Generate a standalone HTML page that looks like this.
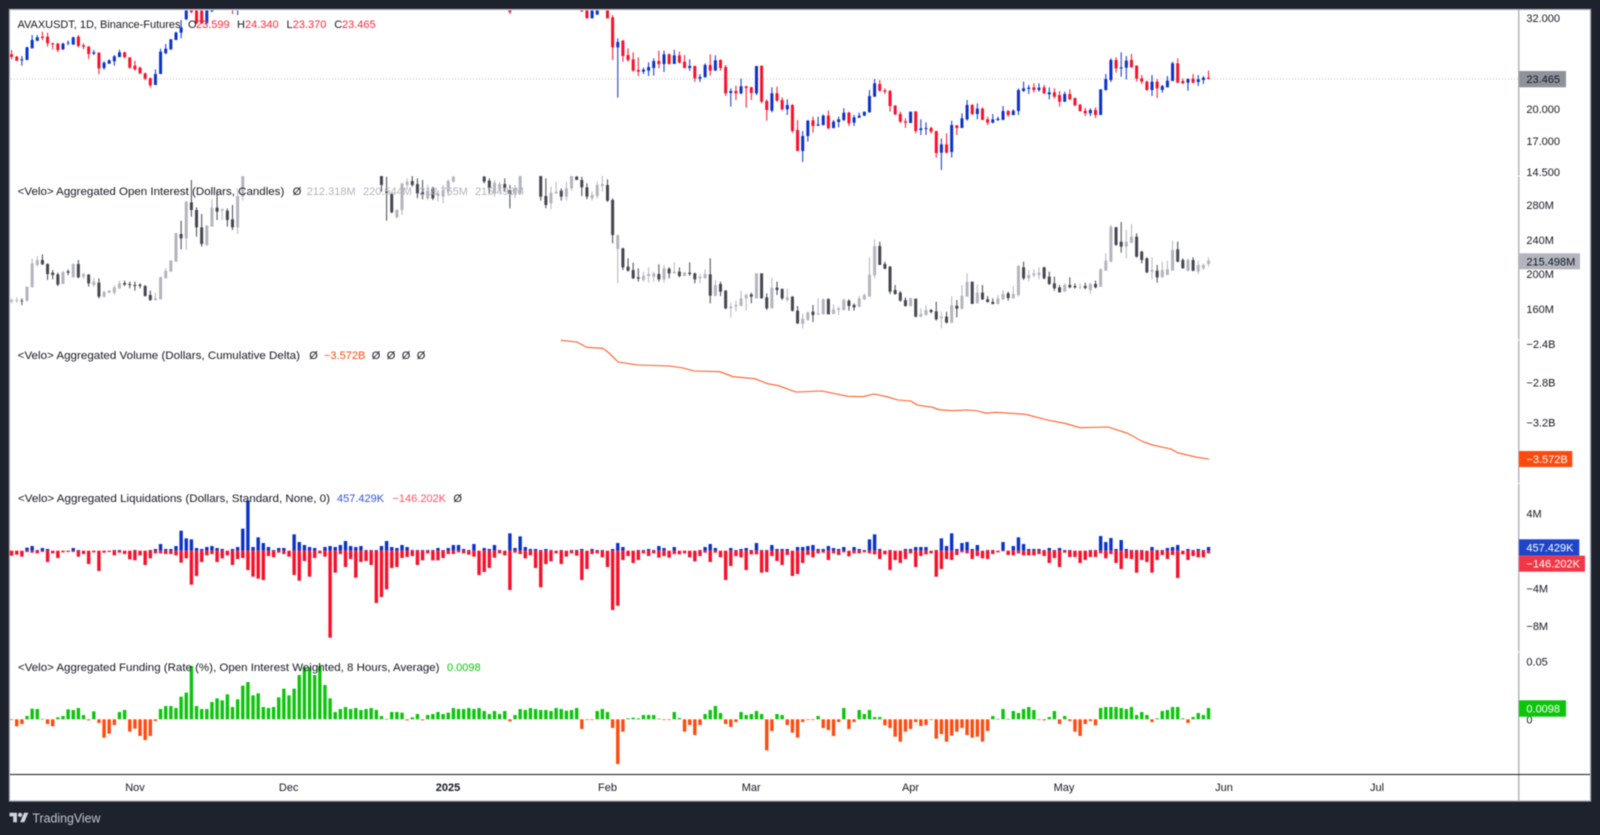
<!DOCTYPE html>
<html><head><meta charset="utf-8"><title>AVAXUSDT</title>
<style>
html,body{margin:0;padding:0;background:#1e222d;width:1600px;height:835px;overflow:hidden}
svg{display:block;position:absolute;left:0;top:0;filter:blur(.4px)}
text{font-family:"Liberation Sans",sans-serif;font-size:11px;fill:#131722;white-space:pre}
.g{fill:#b2b5be}.w{fill:#fff}
</style></head><body>
<svg id="s" xmlns="http://www.w3.org/2000/svg" width="1600" height="835" viewBox="0 0 1600 835">
<defs>
<clipPath id="c1"><rect x="10" y="10.5" width="1580" height="165.5"/></clipPath>
<clipPath id="c2"><rect x="10" y="176" width="1580" height="164"/></clipPath>
<clipPath id="c3"><rect x="10" y="340" width="1580" height="143"/></clipPath>
</defs>
<rect x="0" y="0" width="1600" height="835" fill="#1e222d"/>
<rect x="9.5" y="9.5" width="1581" height="791.5" fill="#fff" stroke="#aeb1b9" stroke-width="1.2"/>
<line x1="11" y1="79" x2="1518" y2="79" stroke="#bfc1c7" stroke-width="1" stroke-dasharray="1 2"/>
<g id="g1" clip-path="url(#c1)"></g>
<g id="g2" clip-path="url(#c2)"></g>
<g id="g3"></g>
<g id="g4"></g>
<g id="g5"></g>

<!-- legends -->
<text x="17.5" y="28" textLength="163" lengthAdjust="spacingAndGlyphs">AVAXUSDT, 1D, Binance-Futures</text>
<text x="188" y="28">O</text><text x="196" y="28" style="fill:#f7283c">23.599</text>
<text x="237" y="28">H</text><text x="245" y="28" style="fill:#f7283c">24.340</text>
<text x="286.5" y="28">L</text><text x="292.7" y="28" style="fill:#f7283c">23.370</text>
<text x="334.3" y="28">C</text><text x="342" y="28" style="fill:#f7283c">23.465</text>

<text x="17.7" y="195" textLength="266.6" lengthAdjust="spacingAndGlyphs">&lt;Velo&gt; Aggregated Open Interest (Dollars, Candles)</text>
<text x="292.7" y="195">Ø</text>
<text x="306.7" y="195" class="g">212.318M</text><text x="363" y="195" class="g">220.544M</text><text x="419" y="195" class="g">218.765M</text><text x="475" y="195" class="g">215.498M</text>

<text x="17.7" y="359" textLength="282.3" lengthAdjust="spacingAndGlyphs">&lt;Velo&gt; Aggregated Volume (Dollars, Cumulative Delta)</text>
<text x="309.3" y="359">Ø</text><text x="324" y="359" style="fill:#ff4a0f">−3.572B</text>
<text x="371.7" y="359">Ø</text><text x="386.7" y="359">Ø</text><text x="401.7" y="359">Ø</text><text x="416.7" y="359">Ø</text>

<!-- axes -->
<rect x="1518" y="10" width="1.5" height="791" fill="#b2b5be"/>
<rect x="1518" y="175.6" width="1.5" height="1" fill="#fff"/>
<rect x="1518" y="339.5" width="1.5" height="1" fill="#fff"/>
<rect x="1518" y="483" width="1.5" height="1" fill="#fff"/>
<rect x="1518" y="651.5" width="1.5" height="1" fill="#fff"/>
<rect x="10" y="774" width="1580" height="1" fill="#131722"/>

<g clip-path="url(#c1)">
<text x="1526.4" y="22">32.000</text>
<text x="1526.4" y="78.5">24.000</text>
<text x="1526.4" y="113">20.000</text>
<text x="1526.4" y="145">17.000</text>
<text x="1526.4" y="176">14.500</text>
</g>
<rect x="1519" y="71" width="47" height="16.3" fill="#8f929b"/>
<text x="1526.4" y="83">23.465</text>

<text x="1526.4" y="209">280M</text>
<text x="1526.4" y="244">240M</text>
<text x="1526.4" y="278">200M</text>
<text x="1526.4" y="313">160M</text>
<rect x="1519" y="253.3" width="61" height="16" fill="#b2b5be"/>
<text x="1526.4" y="265.5">215.498M</text>

<g clip-path="url(#c3)">
<text x="1526.4" y="348">−2.4B</text>
<text x="1526.4" y="386.7">−2.8B</text>
<text x="1526.4" y="426.3">−3.2B</text>
</g>
<rect x="1519" y="451" width="53.3" height="16" fill="#ff4a0f"/>
<text x="1526.4" y="463" class="w">−3.572B</text>

<text x="1526.4" y="517.3">4M</text>
<text x="1526.4" y="592.3">−4M</text>
<text x="1526.4" y="630">−8M</text>
<rect x="1519" y="539.3" width="60.3" height="16.4" fill="#1e45c8"/>
<text x="1526.4" y="551.7" class="w">457.429K</text>
<rect x="1519" y="555.7" width="66" height="16" fill="#f23645"/>
<text x="1526.4" y="567.7" class="w">−146.202K</text>

<text x="1526.4" y="665.7">0.05</text>
<text x="1526.4" y="723.3">0</text>
<rect x="1519" y="700.3" width="47" height="16.4" fill="#0cc40c"/>
<text x="1526.4" y="712.5" class="w">0.0098</text>

<text x="135" y="791" text-anchor="middle">Nov</text>
<text x="288.7" y="791" text-anchor="middle">Dec</text>
<text x="448" y="791" text-anchor="middle" font-weight="bold">2025</text>
<text x="607.5" y="791" text-anchor="middle">Feb</text>
<text x="751.2" y="791" text-anchor="middle">Mar</text>
<text x="910.5" y="791" text-anchor="middle">Apr</text>
<text x="1064" y="791" text-anchor="middle">May</text>
<text x="1224" y="791" text-anchor="middle">Jun</text>
<text x="1377" y="791" text-anchor="middle">Jul</text>

<!-- logo -->
<g transform="translate(9.5 810.6) scale(.53)" fill="#d1d4dc">
<path d="M14 22H7V11H0V4h14v18zM28 22h-8l7.5-18h8L28 22z"/><circle cx="20" cy="8" r="4"/>
</g>
<text x="32.4" y="822.5" textLength="68" lengthAdjust="spacingAndGlyphs" style="fill:#c3c6ce;font-size:13px">TradingView</text>
<g id="top">
<text x="18" y="502" textLength="312" lengthAdjust="spacingAndGlyphs">&lt;Velo&gt; Aggregated Liquidations (Dollars, Standard, None, 0)</text>
<text x="337" y="502" style="fill:#2f55d4">457.429K</text><text x="392.5" y="502" style="fill:#f7525f">−146.202K</text><text x="453.4" y="502">Ø</text>
<text x="18" y="671" textLength="421.5" lengthAdjust="spacingAndGlyphs">&lt;Velo&gt; Aggregated Funding (Rate (%), Open Interest Weighted, 8 Hours, Average)</text>
<text x="447" y="671" style="fill:#0cc40c">0.0098</text>
</g>
</svg>
<script>
var NS="http://www.w3.org/2000/svg";
function X(i){return 11.6+5.137*i}
function R(g,x,y,w,h,c,o){var r=document.createElementNS(NS,"rect");r.setAttribute("x",x);r.setAttribute("y",y);r.setAttribute("width",w);r.setAttribute("height",Math.max(h,.6));r.setAttribute("fill",c);if(o)r.setAttribute("opacity",o);g.appendChild(r)}
function candles(id,off,data,cols){var g=document.getElementById(id);
data.trim().split(/\s+/).forEach(function(t){var m=t.match(/^(\d+)([a-z])(.*)$/),i=+m[1],c=cols[m[2]],v=m[3].split(",").map(function(n){return off+n/3});
var x=X(i);R(g,x-.5,v[0],1,v[3]-v[0],c);R(g,x-1.5,v[1],3,v[2]-v[1],c)})}
candles("g1",0,
"0r150,163,171,178 1r168,170,182,183 2b168,178,181,197 3b140,142,180,180 4b105,120,145,145 5b105,112,122,124 6r95,110,114,120 7r98,110,130,140 8r128,130,133,148 9r128,131,150,156 10b128,131,148,150 11b122,128,130,136 12b110,112,134,134 13r105,110,138,142 14r130,136,140,148 15r138,140,162,177 16b150,157,161,165 17r157,158,205,223 18b184,188,204,209 19b178,181,191,192 20b165,169,184,197 21b149,157,171,172 22r155,157,172,174 23r172,172,203,206 24r182,197,208,212 25r200,203,220,222 26r218,220,236,240 27r232,235,256,263 28b208,222,255,255 29b146,155,222,222 30b132,146,160,162 31b117,118,148,150 32b95,98,120,120 33b60,82,98,115 34b25,25,58,60 35r25,25,36,40 36r25,25,70,72 37r25,25,70,72 38b25,25,70,72 39b25,25,34,36 43r25,25,30,42 44b25,25,30,45 97r25,25,36,42 111r25,25,34,36 112r25,25,55,55 113b25,25,55,55 114b25,25,44,44 116r25,25,55,55 "+
"117r45,52,142,180 118b115,126,142,293 119r120,122,168,185 120r145,165,180,185 121r157,178,212,215 122r172,210,215,228 123b203,209,215,222 124b187,201,212,228 125b175,183,204,227 126r152,183,192,205 127b152,163,192,216 128r160,163,192,194 129b149,166,192,192 130r155,166,188,190 131r165,185,204,205 132b178,198,204,213 133r197,198,235,245 134b222,231,236,246 135b190,195,232,232 136r163,195,212,227 137b166,181,212,212 138r178,180,204,212 139r195,201,280,288 140b265,273,279,320 141r257,273,280,300 142b236,259,280,283 143r257,259,264,323 144r260,262,279,300 145b198,198,280,285 146r197,197,305,310 147r298,303,330,362 148b262,280,332,337 149r260,280,302,305 150r292,300,328,332 151b298,315,328,345 152r312,315,393,398 153r360,390,453,453 154b393,408,453,486 155b360,362,408,425 156r350,361,378,398 157b350,373,377,378 158b343,347,375,377 159r332,347,385,387 160b360,365,384,385 161b350,358,366,382 162b325,338,360,363 163r335,338,370,378 164b345,352,368,378 165b338,347,353,354 166b335,335,347,348 167b270,288,337,338 168b237,250,290,291 169r240,252,272,275 170r265,271,275,282 171r270,273,318,335 172r315,317,343,345 173r335,342,365,369 174r355,364,368,384 175b335,335,369,369 176r334,334,393,400 177b358,385,390,405 178b367,384,387,405 179r380,384,395,401 180r393,393,459,473 181b415,433,458,510 182r400,433,458,460 183b362,375,456,473 184r375,376,384,405 185b340,355,384,384 186b300,315,358,362 187r312,315,342,345 188b310,326,342,358 189r322,326,360,360 190r350,358,368,375 191b342,358,368,370 192b350,356,360,363 193b318,333,360,360 194r330,333,345,350 195b328,332,345,346 196b265,270,333,345 197b245,265,273,276 198b255,263,267,282 199r250,262,270,278 200b250,263,270,275 "+
"201r255,262,280,282 202b262,277,283,298 203r265,277,290,295 204r273,285,305,320 205b275,282,305,306 206r268,282,298,300 207r293,294,316,318 208r312,314,333,335 209r323,332,340,348 210b325,330,340,348 211r322,330,345,354 212b268,268,345,345 213b222,237,270,272 214b175,180,240,246 215r172,180,205,218 216b157,202,205,230 217b168,182,203,238 218r162,180,202,203 219r196,197,236,245 220r225,235,245,252 221r242,245,270,272 222b225,245,270,288 223r237,245,265,294 224b255,258,270,278 225b228,242,262,262 226b185,190,243,243 227r175,190,248,250 228r236,243,250,252 229b235,237,248,272 230r222,236,248,250 231b225,238,246,258 232b228,233,240,252 233r212,233,237,238",
{r:"#f7102a",b:"#0a32c8"});
candles("g2",170,
"0l385,390,395,400 1l382,390,393,398 2d385,392,394,405 3l350,350,392,395 4l265,280,352,352 5l258,270,285,290 6d253,270,283,285 7d280,282,312,330 8d300,308,315,328 9d308,313,344,348 10l303,306,342,342 11d298,304,308,315 12l280,282,322,322 13d270,282,322,325 14l308,312,320,327 15d312,314,340,350 16l323,335,345,350 17d325,338,380,385 18l362,366,380,383 19l360,362,368,370 20l345,352,368,374 21l332,340,355,357 22d332,339,344,348 23d335,342,345,355 24d335,345,348,362 25d340,344,348,355 26d345,348,378,380 27d362,375,390,393 28l368,385,390,392 29l320,322,388,388 30l295,302,325,325 31l270,272,305,305 32l188,190,275,275 33d152,192,205,238 34l93,95,205,240 35d30,97,120,140 36d112,120,172,200 37d132,172,222,230 38l165,167,225,228 39l88,113,170,170 40d60,113,125,150 41l115,118,122,150 42d115,122,150,170 43d105,148,172,180 44l55,78,172,192 45l10,10,80,92 "+
"72d10,10,45,65 73d20,65,68,152 74d70,72,127,130 75l118,120,142,145 76l40,40,120,135 77l25,35,45,60 78d10,33,45,50 79d25,42,70,85 80d30,65,75,88 81l45,62,85,90 82d50,55,85,90 83l60,70,78,95 84l45,60,80,100 85l28,33,65,78 86l10,20,35,38 92d10,20,35,40 93d25,32,55,70 94l30,38,70,80 95l35,42,58,65 96d25,42,55,65 97d45,60,72,115 98l45,55,70,85 99l10,10,70,75 "+
"103d10,10,80,92 104d25,78,105,115 105l50,68,100,118 106l35,65,70,72 107d55,62,80,92 108l35,55,80,92 109l10,10,55,62 110d10,20,30,30 111d20,30,52,78 112d40,52,80,88 113l65,75,85,92 114l35,45,78,85 115l10,42,48,65 116d28,45,92,96 117d85,90,195,220 118l195,195,237,340 119d233,235,292,300 120d265,290,302,305 121d278,300,325,327 122d295,322,326,335 123l305,317,330,335 124l292,312,318,338 125l305,310,320,335 126d283,312,328,335 127l285,295,328,338 128d292,296,310,325 129l277,305,310,310 130d292,305,318,322 131l305,308,318,318 132d277,308,312,318 133d308,310,328,340 134l312,320,325,340 135l298,312,325,325 136d265,313,377,400 137l330,345,378,378 138d335,342,365,378 139d360,362,415,418 140l398,410,415,443 141l392,405,410,425 142l362,385,408,408 143l370,375,385,422 144d368,373,380,400 145l310,310,385,385 146d310,310,385,386 147d370,382,415,420 148l323,353,415,415 149d335,353,360,375 150d355,357,385,390 151l355,382,390,395 152d378,380,422,425 153d408,422,460,462 154l430,446,462,475 155l425,427,450,452 156d405,425,435,456 157l385,430,433,435 158l385,388,433,433 159d385,387,433,433 160l403,418,432,433 161l410,415,420,435 162l385,390,420,422 163d388,392,408,422 164d400,405,412,422 165l378,385,410,412 166l370,375,388,390 167l262,314,380,380 168l208,228,316,325 169d215,228,285,285 170d275,282,296,298 171d288,290,365,372 172d345,360,372,374 173d363,368,392,395 174d382,390,408,410 175l384,384,408,410 176d386,386,440,442 177l415,432,440,442 178l405,420,435,437 179d417,420,426,430 180d395,424,448,452 181l425,440,445,475 182d425,440,458,460 183l378,406,458,460 184d390,407,416,442 185l345,378,417,417 186l310,336,380,380 187d335,335,402,402 188l343,368,400,400 189d345,368,388,390 190d378,388,396,398 191d385,396,402,403 192l375,385,402,403 193l360,372,388,390 194d365,370,384,392 195l348,372,385,385 196l285,288,375,380 197d275,292,325,330 198l300,315,325,335 199l298,310,316,322 200l292,308,315,328 "+
"201d290,292,325,328 202d305,320,342,345 203d320,340,355,362 204d345,352,367,368 205l340,345,365,365 206d322,345,352,355 207d340,348,352,356 208l340,350,352,358 209d338,348,354,358 210l338,342,360,372 211d332,342,352,355 212l295,298,350,350 213l250,272,302,302 214l165,170,275,277 215d170,172,225,227 216d156,215,230,248 217l180,215,230,265 218l162,200,218,220 219d190,200,260,263 220d242,245,270,280 221d262,265,307,310 222l262,300,305,328 223d285,302,322,338 224l275,300,322,323 225l272,298,315,315 226l212,240,302,302 227d215,238,275,277 228d265,270,295,296 229l265,270,302,305 230d262,270,302,304 231l272,285,305,312 232l280,285,295,300 233l262,272,282,290",
{d:"#434651",l:"#b2b5be"});
(function(){var p="48,31 85,36 108,52 145,55 160,70 180,96 225,105 300,108 330,114 355,123 415,125 445,140 495,146 525,161 550,167 590,186 650,183 710,199 745,200 770,192 800,200 825,210 855,213 870,225 905,232 920,239 950,242 985,240 1010,243 1030,250 1050,247 1120,253 1170,270 1210,280 1245,293 1310,291 1355,310 1390,335 1415,346 1455,357 1470,368 1515,382 1543,387".split(" ").map(function(s){var a=s.split(",");return (540+a[0]/2.306).toFixed(1)+","+(330+a[1]/3).toFixed(1)}).join(" ");
var l=document.createElementNS(NS,"polyline");l.setAttribute("points",p);l.setAttribute("fill","none");l.setAttribute("stroke","#ff4a0f");l.setAttribute("stroke-opacity",".9");l.setAttribute("stroke-width","1.1");l.setAttribute("stroke-linejoin","round");document.getElementById("g3").appendChild(l)})();
(function(){var g=document.getElementById("g4");
var d=("182,197 182,194 182,200 173,186 168,188 180,190 174,186 177,216 182,190 182,204 182,187 182,186 174,186 180,200 182,192 182,222 182,187 182,243 182,188 182,186 180,196 180,188 182,192 182,208 180,211 182,196 182,225 180,205 177,190 162,190 177,192 177,192 168,196 122,218 145,205 148,284 174,258 177,216 171,196 168,192 174,216 177,205 182,196 177,225 171,207 116,204 32,240 171,260 142,266 159,270 171,198 180,202 174,188 174,192 182,200 133,255 156,272 165,213 171,260 174,204 182,190 171,200 168,443 171,248 165,192 153,231 168,207 171,263 168,216 180,213 180,225 180,339 168,321 153,298 171,234 174,231 165,204 171,201 180,198 180,225 180,211 180,190 180,211 174,211 180,204 174,192 165,192 165,187 177,190 180,194 162,200 182,255 174,246 177,234 165,203 180,190 183,196 130,300 174,188 139,192 171,205 177,196 177,234 180,292 177,222 180,214 182,190 180,222 182,200 180,190 180,197 177,270 182,237 177,192 180,190 180,202 182,231 177,360 159,347 "+
"171,210 183,198 183,219 180,210 180,190 177,198 180,190 168,203 174,198 183,203 171,192 183,193 183,190 183,202 183,214 180,198 171,188 162,216 174,188 183,202 183,270 174,228 180,198 177,202 174,240 180,193 159,193 180,248 180,246 165,198 177,213 177,225 177,195 183,258 171,252 171,219 168,195 165,202 177,190 177,188 168,210 174,190 177,195 171,187 183,199 171,190 177,190 180,187 148,190 133,193 177,207 183,193 180,240 183,210 183,219 177,207 177,190 171,231 171,198 171,193 183,190 180,260 145,237 168,207 130,210 177,195 159,187 156,190 177,207 165,198 183,205 180,207 180,192 183,187 156,183 183,195 168,196 142,190 162,196 177,196 177,196 177,192 180,198 174,219 180,204 174,231 180,188 180,201 183,201 183,219 183,210 180,201 180,201 138,190 156,205 144,192 177,219 150,237 177,205 180,207 180,248 180,210 183,216 171,248 180,210 180,195 174,207 171,195 165,264 183,193 177,210 180,198 177,202 180,202 171,190").split(" ");
d.forEach(function(s,i){var a=s.split(","),x=X(i)-1.7,b=550.7;
var t=490+a[0]/3,u=490+a[1]/3;
if(b-t>.2)R(g,x,t,3.4,b-t,"#0a32c8");
R(g,x,b,3.4,u-b,"#f7102a")})})();
(function(){var g=document.getElementById("g5");
var d=("210,229,222,198,176,177,207,222,229,202,198,178,180,174,195,211,184,219,263,251,225,186,180,245,236,258,270,258,213,177,168,168,174,140,128,48,168,177,177,156,145,151,133,171,148,107,96,136,130,171,174,171,142,116,136,116,75,52,52,75,48,105,145,186,177,171,177,174,180,177,174,180,198,207,186,186,188,211,202,192,211,195,192,186,192,188,174,177,177,174,177,174,183,192,183,192,183,214,195,177,180,174,177,180,180,183,174,177,182,180,174,237,210,210,183,177,186,234,342,"+
"245,205,203,205,195,195,195,206,210,210,186,204,245,225,255,225,192,180,168,189,222,231,216,186,195,192,183,192,301,243,192,195,225,248,263,216,210,210,198,234,240,258,216,174,237,216,180,192,180,201,201,226,234,260,275,245,237,216,228,225,210,266,252,275,257,245,234,255,263,260,275,243,198,207,177,207,183,189,177,171,180,210,211,201,183,222,198,213,245,258,222,213,226,174,171,171,171,174,177,171,195,186,195,216,205,183,180,171,171,205,219,201,189,195,174").split(",");
var b=719.3;
d.forEach(function(s,i){var y=650+s/3,x=X(i)-1.7;
if(s<208)R(g,x,y,3.4,b-y,"#0cc40c");else R(g,x,b,3.4,y-b,"#ff4a0f")})})();
var s=document.getElementById("s");s.appendChild(document.getElementById("top"));
</script>
</body></html>
